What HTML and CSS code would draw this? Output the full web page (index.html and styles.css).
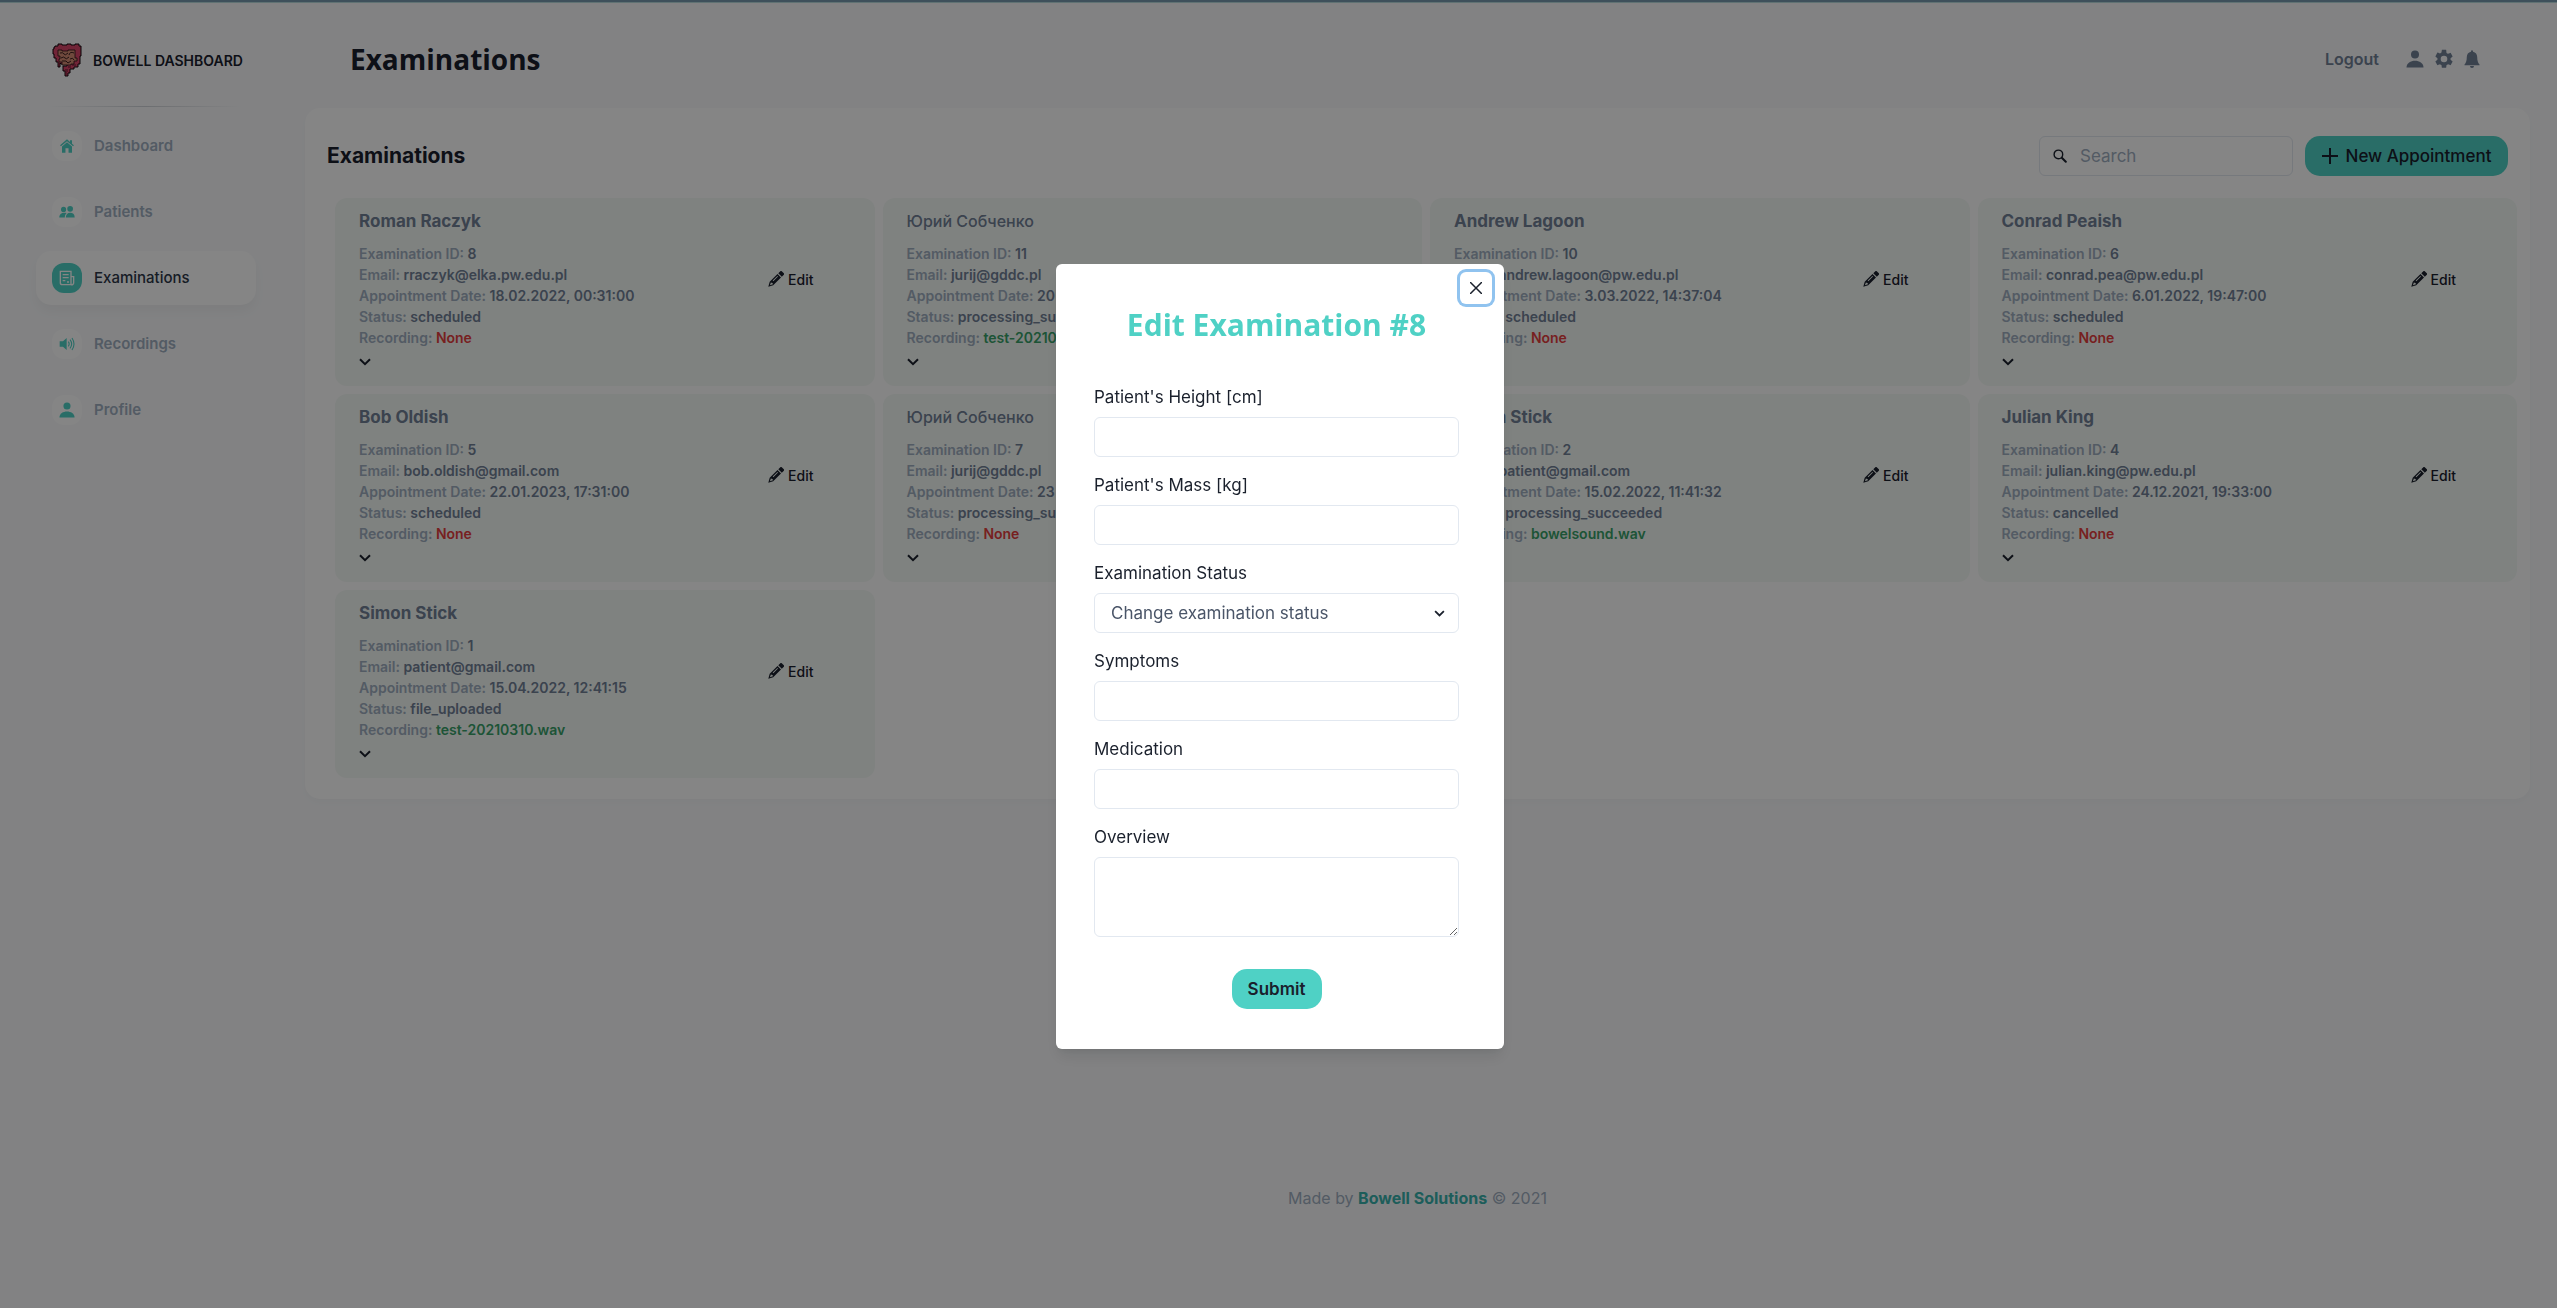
FILE: index.html
```html
<!DOCTYPE html>
<html lang="en">
<head>
<meta charset="utf-8">
<meta name="viewport" content="width=device-width, initial-scale=1">
<title>Bowell Dashboard – Examinations</title>
<link rel="stylesheet" href="styles.css">
</head>
<body>
<svg class="sprite" aria-hidden="true">
  <symbol id="i-home" viewBox="0 0 24 24"><path d="M12 2 1.6 11l1.3 1.5L12 4.700l9.100 7.800 1.300-1.500L19.500 8.500V3.500h-3v2.400zM12 6.300 4.500 12.700V22h5.200v-6.500h4.600V22h5.200v-9.300z"/></symbol>
  <symbol id="i-users" viewBox="0 0 28 24"><circle cx="8" cy="7.500" r="4.500"/><circle cx="19.500" cy="6.500" r="5"/><path d="M12 21.500h15.500c0-5.500-3.500-8-8-8s-7.500 3-7.500 8zM.500 21.500h9.700c0-3 1-5.600 3.100-7.600C6.500 11.500.500 15 .500 21.500z"/></symbol>
  <symbol id="i-news" viewBox="0 0 24 24"><path fill="none" stroke="currentColor" stroke-width="2" d="M2 2h16v20H5a3 3 0 0 1-3-3zM18 10h4v9a3 3 0 0 1-4 3M5.500 7h9M5.500 11.500h9M5.500 16h4M12 18h3"/></symbol>
  <symbol id="i-sound" viewBox="0 0 24 24"><path d="M1 8h5l5.500-5v18L6 16H1z"/><path fill="none" stroke="currentColor" stroke-width="1.600" d="M14 8.500q2.500 3.500 0 7M16.500 5.500q5 6.500 0 13M19.500 3q6 9 0 18"/></symbol>
  <symbol id="i-user" viewBox="0 0 18 18"><circle cx="9" cy="4.500" r="4"/><path d="M.500 17.500c0-9 17-9 17 0z"/></symbol>
  <symbol id="i-gear" viewBox="0 0 24 24"><path d="M19.140 12.940c.040-.300.060-.610.060-.940s-.020-.640-.070-.940l2.030-1.580a.49.49 0 0 0 .120-.610l-1.920-3.320a.49.49 0 0 0-.590-.220l-2.390.960c-.500-.380-1.030-.700-1.620-.940l-.360-2.540A.48.48 0 0 0 13.920 2h-3.840c-.240 0-.430.170-.470.410l-.360 2.540c-.590.240-1.130.570-1.620.940l-2.390-.960a.49.49 0 0 0-.590.220L2.740 8.870a.48.48 0 0 0 .120.610l2.030 1.580c-.050.300-.090.630-.090.940s.020.640.070.940l-2.030 1.580a.49.49 0 0 0-.120.610l1.920 3.320c.120.220.370.290.590.220l2.390-.960c.500.380 1.030.700 1.620.940l.360 2.540c.050.240.240.410.480.410h3.840c.240 0 .440-.170.470-.410l.360-2.540c.590-.240 1.130-.560 1.620-.940l2.390.960c.220.080.470 0 .590-.220l1.920-3.320a.48.48 0 0 0-.120-.610zM12 15.600a3.600 3.600 0 1 1 0-7.200 3.600 3.600 0 0 1 0 7.200z"/></symbol>
  <symbol id="i-bell" viewBox="0 0 16 18"><path d="M7 .500h2v1.200c2.700.500 4.200 2.600 4.200 5.300 0 4 .800 5.800 2.300 7.500v.700H.500v-.700C2 12.800 2.800 11 2.800 7c0-2.700 1.500-4.800 4.200-5.300zM6 16h4a2 2 0 0 1-4 0z"/></symbol>
  <symbol id="i-search" viewBox="0 0 14 14"><g fill="none" stroke="currentColor" stroke-width="1.400" stroke-linecap="round"><circle cx="5.400" cy="5.400" r="4.300"/><path d="m8.800 8.800 4 4" stroke-width="2"/></g></symbol>
  <symbol id="i-pencil" viewBox="0 0 16 16"><path fill-rule="evenodd" d="m10.300 2.200 1.800-1.800a1.300 1.300 0 0 1 1.900 0l1.600 1.600a1.300 1.300 0 0 1 0 1.900l-1.800 1.800zM9.500 3l3.500 3.500L5.200 14.300.300 15.800l1.400-5zM3 11.200l-1.100 3 3-1-.300-1.300-1.300-.200zM9.400 4.900 4.700 9.600l.600.600L10 5.500z"/></symbol>
  <symbol id="i-chevron" viewBox="0 0 12 8"><path fill="none" stroke="currentColor" stroke-width="2" d="m1 1.200 5 5 5-5"/></symbol>
</svg>

<div class="page">
  <aside class="sidebar">
    <a class="brand" href="#">
      <svg class="logo" viewBox="0 0 30 34" aria-hidden="true">
        <path fill="#d8456a" stroke="#15060c" d="M3 3h3V1h4v1h5V1h4v1h4V1h4v2h2v10h-1v8h-2v3h-4v2h-4v4h-2v3h-3v-5h-2v-5h4v-2h-6l-1-1v4H6v-5H4v-4H2v-4H1V6h1V4h1z"/>
        <path fill="#9c3050" d="M24 21h-4v2h-4v3h-3v2h1v4h1v-3h1v-4h3v-2h5z"/>
        <path fill="#d58d76" stroke="#2a1214" stroke-width=".8" d="M6 7h4v1h6V7h7v8h2v3h-3v3h-3v1h-9v-3H7v-3h1v-3H6z"/>
        <path fill="none" stroke="#2a1214" stroke-width=".9" d="M8 10q3-1 4 1t4-1M17 12q1-4 5-2M9 15q3-2 4 0t4-1M18 16q3-2 4 1M10 18h4l2 2 3-2"/>
      </svg>
      <span>BOWELL DASHBOARD</span>
    </a>
    <nav class="menu">
      <a class="menu-item" href="#"><span class="menu-icon"><svg><use href="#i-home"/></svg></span>Dashboard</a>
      <a class="menu-item" href="#"><span class="menu-icon"><svg><use href="#i-users"/></svg></span>Patients</a>
      <a class="menu-item active" href="#"><span class="menu-icon"><svg><use href="#i-news"/></svg></span>Examinations</a>
      <a class="menu-item" href="#"><span class="menu-icon"><svg><use href="#i-sound"/></svg></span>Recordings</a>
      <a class="menu-item" href="#"><span class="menu-icon"><svg><use href="#i-user"/></svg></span>Profile</a>
    </nav>
  </aside>

  <div class="content">
    <header class="topbar">
      <h1>Examinations</h1>
      <div class="tools">
        <a class="logout" href="#">Logout</a>
        <a href="#" aria-label="Account"><svg class="tool"><use href="#i-user"/></svg></a>
        <a href="#" aria-label="Settings"><svg class="tool gear"><use href="#i-gear"/></svg></a>
        <a href="#" aria-label="Notifications"><svg class="tool bell"><use href="#i-bell"/></svg></a>
      </div>
    </header>

    <main class="panel">
      <div class="panel-head">
        <h2>Examinations</h2>
        <label class="search"><svg><use href="#i-search"/></svg><input type="search" placeholder="Search" aria-label="Search"></label>
        <button class="btn new" type="button"><svg viewBox="0 0 16 16"><path d="M8 0v16M0 8h16" fill="none" stroke="currentColor" stroke-width="2"/></svg>New Appointment</button>
      </div>
      <div class="grid">
        <article class="exam">
          <div><h3>Roman Raczyk</h3>
          <p>Examination ID: <b>8</b></p><p>Email: <b>rraczyk@elka.pw.edu.pl</b></p><p>Appointment Date: <b>18.02.2022, 00:31:00</b></p><p>Status: <b>scheduled</b></p><p>Recording: <b class="none">None</b></p>
          <button class="more" type="button" aria-label="Show more"><svg><use href="#i-chevron"/></svg></button></div>
          <button class="edit" type="button"><svg><use href="#i-pencil"/></svg>Edit</button>
        </article>
        <article class="exam">
          <div><h3 class="light">Юрий Собченко</h3>
          <p>Examination ID: <b>11</b></p><p>Email: <b>jurij@gddc.pl</b></p><p>Appointment Date: <b>20</b></p><p>Status: <b>processing_succeeded</b></p><p>Recording: <b class="file">test-20210310.wav</b></p>
          <button class="more" type="button" aria-label="Show more"><svg><use href="#i-chevron"/></svg></button></div>
        </article>
        <article class="exam">
          <div><h3>Andrew Lagoon</h3>
          <p>Examination ID: <b>10</b></p><p>Email: <b>andrew.lagoon@pw.edu.pl</b></p><p>Appointment Date: <b>3.03.2022, 14:37:04</b></p><p>Status: <b>scheduled</b></p><p>Recording: <b class="none">None</b></p>
          <button class="more" type="button" aria-label="Show more"><svg><use href="#i-chevron"/></svg></button></div>
          <button class="edit" type="button"><svg><use href="#i-pencil"/></svg>Edit</button>
        </article>
        <article class="exam">
          <div><h3>Conrad Peaish</h3>
          <p>Examination ID: <b>6</b></p><p>Email: <b>conrad.pea@pw.edu.pl</b></p><p>Appointment Date: <b>6.01.2022, 19:47:00</b></p><p>Status: <b>scheduled</b></p><p>Recording: <b class="none">None</b></p>
          <button class="more" type="button" aria-label="Show more"><svg><use href="#i-chevron"/></svg></button></div>
          <button class="edit" type="button"><svg><use href="#i-pencil"/></svg>Edit</button>
        </article>
        <article class="exam">
          <div><h3>Bob Oldish</h3>
          <p>Examination ID: <b>5</b></p><p>Email: <b>bob.oldish@gmail.com</b></p><p>Appointment Date: <b>22.01.2023, 17:31:00</b></p><p>Status: <b>scheduled</b></p><p>Recording: <b class="none">None</b></p>
          <button class="more" type="button" aria-label="Show more"><svg><use href="#i-chevron"/></svg></button></div>
          <button class="edit" type="button"><svg><use href="#i-pencil"/></svg>Edit</button>
        </article>
        <article class="exam">
          <div><h3 class="light">Юрий Собченко</h3>
          <p>Examination ID: <b>7</b></p><p>Email: <b>jurij@gddc.pl</b></p><p>Appointment Date: <b>23</b></p><p>Status: <b>processing_succeeded</b></p><p>Recording: <b class="none">None</b></p>
          <button class="more" type="button" aria-label="Show more"><svg><use href="#i-chevron"/></svg></button></div>
        </article>
        <article class="exam">
          <div><h3>Simon Stick</h3>
          <p>Examination ID: <b>2</b></p><p>Email: <b>patient@gmail.com</b></p><p>Appointment Date: <b>15.02.2022, 11:41:32</b></p><p>Status: <b>processing_succeeded</b></p><p>Recording: <b class="file">bowelsound.wav</b></p>
          <button class="more" type="button" aria-label="Show more"><svg><use href="#i-chevron"/></svg></button></div>
          <button class="edit" type="button"><svg><use href="#i-pencil"/></svg>Edit</button>
        </article>
        <article class="exam">
          <div><h3>Julian King</h3>
          <p>Examination ID: <b>4</b></p><p>Email: <b>julian.king@pw.edu.pl</b></p><p>Appointment Date: <b>24.12.2021, 19:33:00</b></p><p>Status: <b>cancelled</b></p><p>Recording: <b class="none">None</b></p>
          <button class="more" type="button" aria-label="Show more"><svg><use href="#i-chevron"/></svg></button></div>
          <button class="edit" type="button"><svg><use href="#i-pencil"/></svg>Edit</button>
        </article>
        <article class="exam">
          <div><h3>Simon Stick</h3>
          <p>Examination ID: <b>1</b></p><p>Email: <b>patient@gmail.com</b></p><p>Appointment Date: <b>15.04.2022, 12:41:15</b></p><p>Status: <b>file_uploaded</b></p><p>Recording: <b class="file">test-20210310.wav</b></p>
          <button class="more" type="button" aria-label="Show more"><svg><use href="#i-chevron"/></svg></button></div>
          <button class="edit" type="button"><svg><use href="#i-pencil"/></svg>Edit</button>
        </article>
      </div>
    </main>

    <footer class="footer">Made by <a href="#">Bowell Solutions</a> © 2021</footer>
  </div>
</div>

<div class="overlay">
  <section class="modal" role="dialog" aria-modal="true" aria-labelledby="modal-title">
    <button class="close" type="button" aria-label="Close"><svg viewBox="0 0 12 12"><path d="m0 0 12 12M12 0 0 12" fill="none" stroke="currentColor" stroke-width="1.500"/></svg></button>
    <h2 id="modal-title">Edit Examination #8</h2>
    <form class="form">
      <div class="field"><label for="height">Patient's Height [cm]</label><input id="height" type="text"></div>
      <div class="field"><label for="mass">Patient's Mass [kg]</label><input id="mass" type="text"></div>
      <div class="field"><label for="status">Examination Status</label>
        <div class="select"><select id="status"><option>Change examination status</option></select><svg><use href="#i-chevron"/></svg></div></div>
      <div class="field"><label for="symptoms">Symptoms</label><input id="symptoms" type="text"></div>
      <div class="field"><label for="medication">Medication</label><input id="medication" type="text"></div>
      <div class="field"><label for="overview">Overview</label><textarea id="overview"></textarea></div>
      <button class="btn submit" type="button">Submit</button>
    </form>
  </section>
</div>
</body>
</html>
```
FILE: styles.css
```css
*, *::before, *::after { box-sizing: border-box; }

:root {
  --teal: #4fd1c5;
  --ink: #1a202c;
  --slate: #718096;
  --mist: #a0aec0;
  --line: #e2e8f0;
}

body {
  margin: 0;
  background: #f9fafc;
  color: var(--ink);
  font: 400 16px/24px Inter, "Noto Sans", sans-serif;
}
h1, h2, h3, p { margin: 0; }
a { color: inherit; text-decoration: none; }
button, input, select, textarea { font: inherit; color: inherit; }
button { border: 0; padding: 0; background: none; }
svg { fill: currentColor; flex: none; }
.sprite { display: none; }

.page {
  display: flex;
  min-height: 100vh;
  border-top: 2px solid #7899ae;
  box-shadow: inset 0 1px #b8dadd;
}

/* Sidebar */
.sidebar { width: 275px; flex: none; padding: 41px 19px 0 36px; }
.brand {
  display: flex;
  align-items: flex-start;
  gap: 11px;
  height: 66px;
  padding-left: 16px;
  font-size: 14px;
  font-weight: 600;
  white-space: nowrap;
}
.brand span { padding-top: 6px; }
.logo { width: 30px; height: 34px; }
.menu { display: flex; flex-direction: column; gap: 12px; }
.menu::before {
  content: "";
  height: 1px;
  background: linear-gradient(90deg, transparent, #d0d3d8 50%, transparent);
  margin: -3px 15px 0 12px;
}
.menu-item {
  display: flex;
  align-items: center;
  gap: 12px;
  height: 54px;
  padding-left: 16px;
  border-radius: 15px;
  color: var(--mist);
  font-size: 15px;
  font-weight: 600;
}
.menu-icon {
  display: grid;
  place-items: center;
  width: 30px;
  height: 30px;
  border-radius: 12px;
  background: #fff;
  color: var(--teal);
}
.menu-icon svg { width: 16px; height: 16px; }
.active { background: #fff; color: #2d3748; box-shadow: 0 7px 11px #0000000a; font-weight: 500; }
.active .menu-icon { background: var(--teal); color: #fff; }

/* Content */
.content { flex: 1; display: flex; flex-direction: column; min-width: 0; padding: 0 27px 0 30px; }
.topbar { display: flex; justify-content: space-between; align-items: center; height: 106px; padding: 8px 50px 0 45px; }
h1 { font: 700 28px/40px "Open Sans", sans-serif; }
.tools { display: flex; align-items: center; gap: 9px; color: var(--slate); }
.tools a { display: flex; }
.tools .logout { margin-right: 18px; font-weight: 600; }
.tool { width: 18px; height: 18px; }
.gear { width: 22px; height: 22px; }
.bell { width: 16px; }

.panel { padding: 28px 13px 21px 15px; border-radius: 15px; background: #fff; box-shadow: 0 4px 6px #00000005; }
.panel-head { display: flex; align-items: center; gap: 12px; padding: 0 9px 22px 7px; }
.panel-head h2 { margin-right: auto; font-size: 21px; font-weight: 700; }
.search {
  display: flex;
  align-items: center;
  width: 254px;
  height: 40px;
  padding-left: 13px;
  gap: 11px;
  border: 1px solid var(--line);
  border-radius: 6px;
}
.search svg { width: 14px; height: 14px; }
.search input { flex: 1; min-width: 0; border: 0; background: none; outline: 0; font-size: 17px; }
.search input::placeholder { color: var(--mist); opacity: 1; }
.btn { height: 40px; border-radius: 15px; background: var(--teal); font-size: 17px; font-weight: 500; }
.new { display: flex; align-items: center; justify-content: center; gap: 8px; width: 203px; }
.new svg { width: 16px; height: 16px; }

.grid { display: grid; grid-template-columns: repeat(4, 1fr); gap: 8px; padding-left: 15px; }
.exam {
  display: flex;
  justify-content: space-between;
  align-items: center;
  min-width: 0;
  padding: 11px 61px 17px 24px;
  border-radius: 12px;
  background: #f4f9f6;
  color: var(--mist);
  font-size: 14px;
  line-height: 21px;
  font-weight: 600;
}
.exam h3 { margin-bottom: 10px; font-size: 17px; line-height: 24px; color: var(--slate); }
.exam .light { font-size: 16px; font-weight: 500; }
.exam b { font-weight: 600; color: var(--slate); }
.exam .none { color: #e53e3e; }
.exam .file { color: #38a169; }
.more { display: flex; height: 14px; margin-top: 7px; align-items: center; color: var(--ink); }
.more svg { width: 12px; height: 8px; }
.edit { display: flex; align-items: center; gap: 4px; padding-bottom: 20px; color: var(--ink); font-size: 14px; font-weight: 500; }
.edit svg { width: 16px; height: 16px; }

.footer { margin-top: auto; padding: 60px 0 98px; text-align: center; color: var(--mist); }
.footer a { color: #38b2ac; font-weight: 700; }

/* Dialog */
.overlay {
  position: fixed;
  inset: 0;
  display: flex;
  align-items: center;
  justify-content: center;
  padding: 5px 0 0 3px;
  background: #0000007a;
}
.modal {
  position: relative;
  width: 448px;
  padding: 40px 45px 40px 38px;
  border-radius: 6px;
  background: #fff;
  box-shadow: 0 10px 15px -3px #0000001a, 0 4px 6px -2px #0000000d;
}
.modal h2 { margin-bottom: 39px; text-align: center; font: 700 30px/42px "Open Sans", sans-serif; color: var(--teal); }
.close {
  position: absolute;
  top: 8px;
  right: 12px;
  display: grid;
  place-items: center;
  width: 32px;
  height: 32px;
  border-radius: 6px;
  box-shadow: 0 0 0 3px #90c3ef;
}
.close svg { width: 12px; height: 12px; }
.form { display: flex; flex-direction: column; gap: 16px; font-size: 17px; }
.field { display: flex; flex-direction: column; gap: 8px; }
.field input, .field select, .field textarea {
  display: block;
  width: 100%;
  height: 40px;
  padding: 0 16px;
  border: 1px solid var(--line);
  border-radius: 6px;
  background: #fff;
}
.field textarea { height: 80px; resize: vertical; }
.select { position: relative; }
.field select { appearance: none; color: #4a5568; }
.select svg { position: absolute; right: 14px; top: 17px; width: 11px; height: 7px; pointer-events: none; }
.submit { align-self: center; width: 90px; margin-top: 16px; font-weight: 600; }
```
